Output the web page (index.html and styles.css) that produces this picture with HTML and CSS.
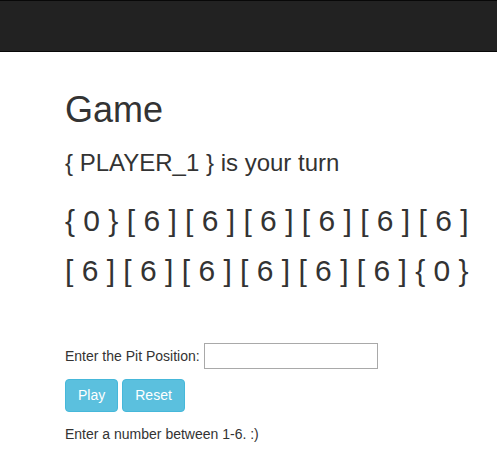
FILE: index.html
```html
<!DOCTYPE html>
<html lang="en">
<head>
<meta charset="utf-8">
<title>Game</title>
<link rel="stylesheet" href="styles.css">
</head>
<body>
<nav class="navbar"></nav>
<main class="container">
  <h1 class="title">Game</h1>
  <h3 class="turn">{ PLAYER_1 } is your turn</h3>
  <div class="board">
    <div class="pits">{ 0 } [ 6 ] [ 6 ] [ 6 ] [ 6 ] [ 6 ] [ 6 ]</div>
    <div class="pits">[ 6 ] [ 6 ] [ 6 ] [ 6 ] [ 6 ] [ 6 ] { 0 }</div>
  </div>
  <form class="move">
    <div class="field">
      <label class="field-label" for="pit">Enter the Pit Position:</label>
      <input class="field-input" id="pit" type="text">
    </div>
    <div class="actions">
      <button class="btn" type="button">Play</button>
      <button class="btn" type="button">Reset</button>
    </div>
    <p class="hint">Enter a number between 1-6. :)</p>
  </form>
</main>
</body>
</html>
```
FILE: styles.css
```css
* { box-sizing: border-box; }
html, body { margin: 0; padding: 0; }
body {
  font-family: "Liberation Sans", Arial, sans-serif;
  font-size: 14px;
  line-height: 20px;
  color: #333;
  background: #fff;
}
.navbar {
  height: 52px;
  background: #222;
  border-top: 1px solid #080808;
  border-bottom: 1px solid #080808;
}
.container {
  padding: 0 15px 0 65px;
}
.title {
  margin: 38px 0 0;
  font-size: 36px;
  line-height: 40px;
  font-weight: 500;
}
.turn {
  margin: 20px 0 0;
  font-size: 24px;
  line-height: 26px;
  font-weight: 500;
}
.board {
  margin-top: 20px;
}
.pits {
  font-size: 30px;
  line-height: 50px;
  white-space: nowrap;
}
.move {
  margin-top: 47px;
}
.field {
  display: flex;
  align-items: center;
  gap: 4px;
}
.field-input {
  width: 174px;
  height: 26px;
  border: 1px solid #a9a9a9;
  padding: 1px 2px;
  font: 13px "Liberation Sans", Arial, sans-serif;
  margin: 0;
}
.actions {
  display: flex;
  gap: 4px;
  margin-top: 10px;
}
.btn {
  height: 33px;
  padding: 6px 12px;
  border: 1px solid #46b8da;
  border-radius: 4px;
  background: #5bc0de;
  color: #fff;
  font: 14px/19px "Liberation Sans", Arial, sans-serif;
  cursor: pointer;
}
.hint {
  margin: 12px 0 0;
}
```
